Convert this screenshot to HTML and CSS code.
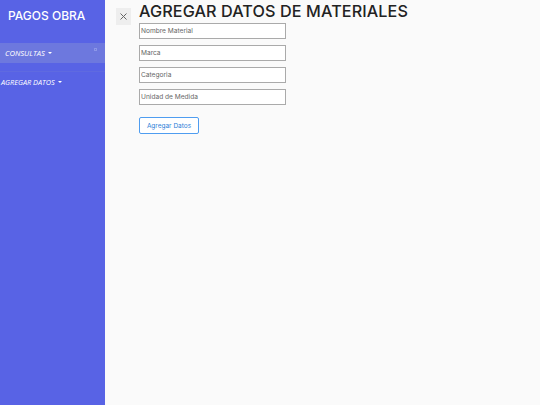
FILE: index.html
```html
<!DOCTYPE html>
<html lang="es">
<head>
<meta charset="utf-8">
<link rel="stylesheet" href="styles.css">
</head>
<body>
<div class="wrapper">
  <nav class="sidebar">
    <div class="brand">PAGOS OBRA</div>
    <ul class="menu">
      <li class="item active"><span>CONSULTAS</span><i class="caret"></i><b class="dot"></b></li>
      <li class="item second"><span>AGREGAR DATOS</span><i class="caret"></i></li>
    </ul>
  </nav>
  <div class="toggle">
    <svg width="9" height="9" viewBox="0 0 9 9"><path d="M1.5 1.5L7.5 7.5M7.5 1.5L1.5 7.5" stroke="#666" stroke-width="1"/></svg>
  </div>
  <main class="content">
    <h1>AGREGAR DATOS DE MATERIALES</h1>
    <form class="form">
      <input class="field" placeholder="Nombre Material">
      <input class="field" placeholder="Marca">
      <input class="field" placeholder="Categoria">
      <input class="field" placeholder="Unidad de Medida">
      <button type="button" class="btn">Agregar Datos</button>
    </form>
  </main>
</div>
</body>
</html>
```
FILE: styles.css
```css
* { box-sizing: border-box; }
html, body { margin: 0; height: 100%; }
body { background: #fafafa; font-family: "Inter", "Open Sans", sans-serif; }
.wrapper { display: flex; height: 405px; }
.sidebar { width: 105px; background: #5863e5; color: #fff; flex-shrink: 0; }
.brand { font-size: 12px; font-weight: 500; padding: 8px 0 0 8px; height: 43px; }
.menu { list-style: none; margin: 0; padding: 0; }
.item { font-family: "Open Sans", sans-serif; font-size: 7.6px; font-style: italic; font-weight: 400; display: flex; align-items: center; gap: 3px; position: relative; }
.item.active { background: #6d78de; height: 20px; padding-left: 5px; }
.item.second { margin-top: 8px; padding-left: 1px; height: 20px; border-top: 1px solid #5f6ae0; font-size: 7.3px; }
.caret { width: 0; height: 0; border-left: 2.5px solid transparent; border-right: 2.5px solid transparent; border-top: 2.5px solid #fff; display: inline-block; }
.dot { position: absolute; right: 8px; top: 5px; width: 3px; height: 3px; border: 1px solid #8c96e8; }
.toggle { width: 15px; height: 17px; margin: 8px 0 0 11px; background: #eeeeee; display: flex; align-items: center; justify-content: center; flex-shrink: 0; }
.content { padding-left: 8px; }
h1 { margin: 0; font-size: 16.2px; font-weight: 500; color: #222; line-height: 22px; letter-spacing: 0.1px; }
.form { display: flex; flex-direction: column; align-items: flex-start; margin-top: 1px; }
.field { width: 147px; height: 16px; border: 1px solid #aaa; background: #fff; font-family: inherit; font-size: 6.6px; padding: 0 1px; margin-bottom: 6px; color: #666; }
.field::placeholder { color: #666; }
.btn { margin-top: 6px; width: 60px; height: 17px; background: #fff; border: 1px solid #4f9df0; border-radius: 2px; color: #2f7fd8; font-family: inherit; font-size: 6.5px; padding: 0; }
```
